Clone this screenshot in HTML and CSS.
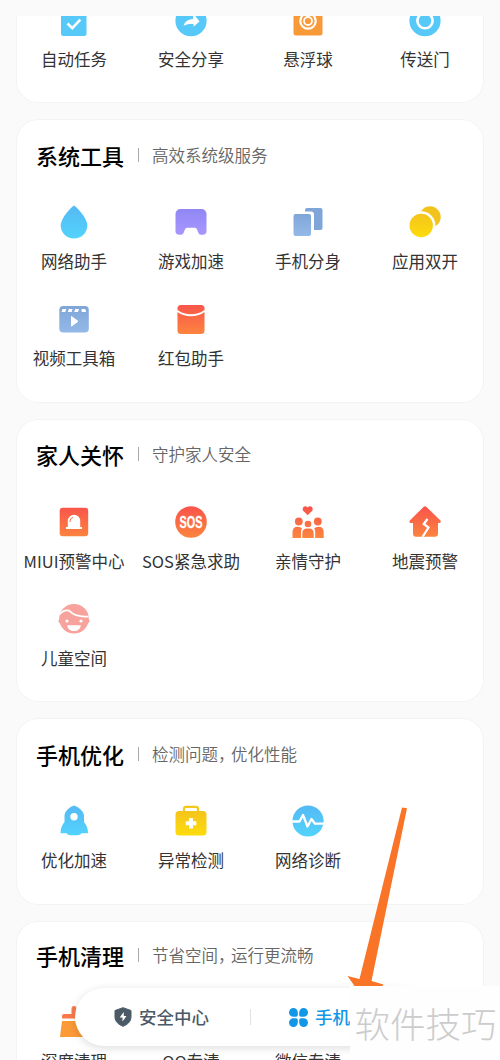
FILE: index.html
```
<!DOCTYPE html>
<html lang="zh-CN">
<head>
<meta charset="utf-8">
<title>手机管家</title>
<link rel="stylesheet" href="styles.css">
</head>
<body>
<svg class="defs" width="0" height="0">
  <defs>
    <linearGradient id="blue" x1="0" y1="0" x2="0" y2="1"><stop offset="0" stop-color="#54b9f4"/><stop offset="1" stop-color="#53d3fc"/></linearGradient>
    <linearGradient id="red" gradientUnits="userSpaceOnUse" x1="0" y1="3" x2="0" y2="33"><stop offset="0" stop-color="#f9544b"/><stop offset="1" stop-color="#fc843f"/></linearGradient>
    <linearGradient id="yellow" x1="0" y1="0" x2="0" y2="1"><stop offset="0" stop-color="#f4c41c"/><stop offset="1" stop-color="#fddc0c"/></linearGradient>
    <linearGradient id="slate" x1="0" y1="0" x2="0" y2="1"><stop offset="0" stop-color="#80a5d8"/><stop offset="1" stop-color="#93b9e8"/></linearGradient>
    <linearGradient id="purple" x1="0" y1="0" x2="0" y2="1"><stop offset="0" stop-color="#9087f4"/><stop offset="1" stop-color="#a896ff"/></linearGradient>
  </defs>
</svg>
<div class="screen">
  <main class="scroll">
    <section class="card card-first">
      <div class="grid">
        <div class="item">
          <svg class="icon" viewBox="0 0 36 36"><rect x="5" y="5" width="25.5" height="29" rx="2.5" fill="#56c9f8"/><path d="M11.5 21.5l4.8 4.7 8-8.6" fill="none" stroke="#fff" stroke-width="2.6"/></svg>
          <span class="label">自动任务</span>
        </div>
        <div class="item">
          <svg class="icon" viewBox="0 0 36 36"><circle cx="18" cy="18.7" r="15.6" fill="#56c9f8"/><path d="M20 11l6.500 8.500-6 5.200v-2.700c-4-.2-7 0-10 2 1.500-4.500 4-6.500 9.500-7z" fill="#fff"/></svg>
          <span class="label">安全分享</span>
        </div>
        <div class="item">
          <svg class="icon" viewBox="0 0 36 36"><rect x="3.5" y="5" width="29" height="28.5" rx="2.5" fill="#f99a39"/><circle cx="18" cy="19" r="7.7" fill="none" stroke="#fff" stroke-width="2.2"/><circle cx="18" cy="19" r="4" fill="none" stroke="#fff" stroke-width="1.8"/></svg>
          <span class="label">悬浮球</span>
        </div>
        <div class="item">
          <svg class="icon" viewBox="0 0 36 36"><circle cx="18" cy="18.7" r="15.6" fill="#56c9f8"/><circle cx="18" cy="18.7" r="7.600" fill="none" stroke="#fff" stroke-width="2.6"/></svg>
          <span class="label">传送门</span>
        </div>
      </div>
    </section>

    <section class="card">
      <header class="head"><h2 class="title">系统工具</h2><i class="bar"></i><p class="sub">高效系统级服务</p></header>
      <div class="grid">
        <div class="item">
          <svg class="icon" viewBox="0 0 36 36"><path d="M18 1.500C19 1.500 31.300 13.300 31.300 21.600a13.300 13 0 0 1-26.600 0C4.700 13.300 17 1.500 18 1.500z" fill="url(#blue)"/></svg>
          <span class="label">网络助手</span>
        </div>
        <div class="item">
          <svg class="icon" viewBox="0 0 36 36"><path d="M7.500 5h21a5 5 0 0 1 5 5v17a3.800 3.800 0 0 1-3.800 3.800H28c-4 0-2.500-7-6.500-7h-7c-4 0-2.500 7-6.500 7H6.300A3.800 3.800 0 0 1 2.500 27V10a5 5 0 0 1 5-5z" fill="url(#purple)"/></svg>
          <span class="label">游戏加速</span>
        </div>
        <div class="item">
          <svg class="icon" viewBox="0 0 36 36"><path d="M17 4h13.500a2 2 0 0 1 2 2v18a2 2 0 0 1-2 2H24V10.500a3 3 0 0 0-3-3h-6V6a2 2 0 0 1 2-2z" fill="#80a5d8"/><rect x="3.500" y="10" width="17.500" height="22" rx="2" fill="url(#slate)"/></svg>
          <span class="label">手机分身</span>
        </div>
        <div class="item">
          <svg class="icon" viewBox="0 0 36 36"><circle cx="23" cy="13" r="10.700" fill="#f3c31d"/><circle cx="14.200" cy="21.500" r="14.200" fill="#fff"/><circle cx="14.200" cy="21.500" r="11.700" fill="url(#yellow)"/></svg>
          <span class="label">应用双开</span>
        </div>
        <div class="item">
          <svg class="icon" viewBox="0 0 36 36"><rect x="3.300" y="5" width="29.500" height="26.500" rx="4" fill="url(#slate)"/><path d="M6.500 8h3.800l-1 3H5.500zM12.800 8h3.800l-1 3h-3.800zM19.200 8H23l-1 3h-3.800zM25.500 8h3.800l.8 3h-4.400z" fill="#fff"/><path d="M15.500 15.500v9.600l6.500-4.800z" fill="#fff" stroke="#fff" stroke-linejoin="round"/></svg>
          <span class="label">视频工具箱</span>
        </div>
        <div class="item">
          <svg class="icon" viewBox="0 0 36 36"><rect x="4.500" y="4" width="27" height="29" rx="3.500" fill="url(#red)"/><path d="M4 9.700c8.500 6 19.500 6 28 0" fill="none" stroke="#fff" stroke-width="2"/></svg>
          <span class="label">红包助手</span>
        </div>
      </div>
    </section>

    <section class="card">
      <header class="head"><h2 class="title">家人关怀</h2><i class="bar"></i><p class="sub">守护家人安全</p></header>
      <div class="grid">
        <div class="item">
          <svg class="icon" viewBox="0 0 36 36"><rect x="3.700" y="3.700" width="28.500" height="28.500" rx="3" fill="url(#red)"/><path d="M10 25v-2h1.800v-6a6.200 6.200 0 0 1 12.400 0v6H26v2z" fill="#fff"/><path d="M14 18c0-2.500 1-4 3-4.500" fill="none" stroke="#f96a46" stroke-width="1"/></svg>
          <span class="label">MIUI预警中心</span>
        </div>
        <div class="item">
          <svg class="icon" viewBox="0 0 36 36"><circle cx="18" cy="18" r="15.800" fill="url(#red)"/><text x="18" y="24" text-anchor="middle" textLength="23" lengthAdjust="spacingAndGlyphs" class="sos">SOS</text></svg>
          <span class="label">SOS紧急求助</span>
        </div>
        <div class="item">
          <svg class="icon" viewBox="0 0 36 36"><g fill="url(#red)"><path d="M17.700 11.300l-4.300-4.200c-2.500-3 1.800-6.800 4.300-3.700 2.500-3.100 6.800.7 4.300 3.700z"/><circle cx="8.800" cy="17.500" r="3.900"/><circle cx="27.800" cy="17.500" r="3.900"/><circle cx="18" cy="20" r="3.300"/><path d="M2.500 34v-5.500q0-5.800 5-5.800 3 0 4.500 1.500-1 1.500-1 4V34zM33.700 34v-5.500q0-5.800-5-5.800-3 0-4.500 1.500 1 1.500 1 4V34zM12.300 34v-4.500q0-4.900 4.700-4.900h2q4.700 0 4.700 4.900V34z"/></g></svg>
          <span class="label">亲情守护</span>
        </div>
        <div class="item">
          <svg class="icon" viewBox="0 0 36 36"><path d="M16.500 3q1.500-1.300 3 0L33.500 16.500q1 2.500-1.500 2.500h-1V29.800a3 3 0 0 1-3 3H9a3 3 0 0 1-3-3V19H4Q1.500 19 2.800 16.500z" fill="url(#red)"/><path d="M20.500 15L16.800 20l4.700 3.500-6 9.500" fill="none" stroke="#fff" stroke-width="2.300"/></svg>
          <span class="label">地震预警</span>
        </div>
        <div class="item">
          <svg class="icon" viewBox="0 0 36 36"><circle cx="18" cy="17.800" r="14.800" fill="#f7a29c"/><circle cx="4.700" cy="20" r="2.300" fill="#f7a29c"/><circle cx="31.300" cy="20" r="2.300" fill="#f7a29c"/><path d="M3.500 13.500c3-3.500 6.500-4.500 9.500-3.800 5 5 12 6.500 19.500 5.800" fill="none" stroke="#fff" stroke-width="1.700"/><circle cx="11" cy="20" r="1.600" fill="#fff"/><circle cx="25" cy="20" r="1.600" fill="#fff"/><path d="M11.300 24.300h13.400c0 7.700-13.400 7.700-13.400 0z" fill="#fff"/></svg>
          <span class="label">儿童空间</span>
        </div>
      </div>
    </section>

    <section class="card">
      <header class="head"><h2 class="title">手机优化</h2><i class="bar"></i><p class="sub">检测问题<span class="comma">，</span>优化性能</p></header>
      <div class="grid">
        <div class="item">
          <svg class="icon" viewBox="0 0 36 36"><path d="M18 2.500c4.500 1.500 10 5.500 10 10.500v6q4 4.500 4 11.300h-6.500q-1 2-4 2h-7q-3 0-4-2H4.500q0-6.800 4-11.300v-6C8.500 8 13.500 4 18 2.500z" fill="url(#blue)"/><circle cx="18" cy="13.700" r="3.700" fill="#fff"/></svg>
          <span class="label">优化加速</span>
        </div>
        <div class="item">
          <svg class="icon" viewBox="0 0 36 36"><path d="M11 8.500V5.800q0-2 2-2h10q2 0 2 2v2.700" fill="none" stroke="#f4c81b" stroke-width="2.200"/><rect x="2.500" y="8" width="31" height="24.500" rx="3.500" fill="url(#yellow)"/><path d="M18 15v10.500M12.700 20.300h10.600" stroke="#fff" stroke-width="4"/></svg>
          <span class="label">异常检测</span>
        </div>
        <div class="item">
          <svg class="icon" viewBox="0 0 36 36"><circle cx="18" cy="18" r="15.600" fill="url(#blue)"/><path d="M2 18.500h7.500l3.500-6.500 4.500 11.500 4-7.500 3.500 4.700h9" fill="none" stroke="#fff" stroke-width="2.300" stroke-linejoin="round"/></svg>
          <span class="label">网络诊断</span>
        </div>
      </div>
    </section>

    <section class="card card-last">
      <header class="head"><h2 class="title">手机清理</h2><i class="bar"></i><p class="sub">节省空间<span class="comma">，</span>运行更流畅</p></header>
      <div class="grid">
        <div class="item">
          <svg class="icon" viewBox="0 0 36 36"><path d="M6 14.500V12q0-2 2-2h7.500V5q0-3 2.500-3t2.500 3v5H28q2 0 2 2v2.500z" fill="#f9794d"/><path d="M6 17h24l2 16H4z" fill="#fb9a37"/></svg>
          <span class="label">深度清理</span>
        </div>
        <div class="item"><span class="icon"></span><span class="label">QQ专清</span></div>
        <div class="item"><span class="icon"></span><span class="label">微信专清</span></div>
      </div>
    </section>
  </main>

  <nav class="nav">
    <div class="tab">
      <svg class="shield" viewBox="0 0 18 20"><path d="M9 .7l8 2.800v6.500c0 4.500-3.500 7.500-8 9.300C4.500 17.500 1 14.500 1 10V3.500z" fill="#4c5a67" stroke="#4c5a67" stroke-linejoin="round"/><path d="M9.800 5L5.700 10.500h2.800v4l4-5.500H9.800z" fill="#fff"/></svg>
      <span>安全中心</span>
    </div>
    <i class="split"></i>
    <div class="tab active">
      <svg class="apps" viewBox="0 0 19 19" fill="#1296e6"><path d="M4.400 0a4.400 4.400 0 0 1 4.400 4.400V7a1.800 1.800 0 0 1-1.800 1.800H4.400a4.400 4.400 0 0 1 0-8.800z"/><path d="M14.600 0a4.400 4.400 0 0 1 0 8.800H12A1.800 1.800 0 0 1 10.200 7V4.400A4.400 4.400 0 0 1 14.600 0z"/><path d="M4.400 19a4.400 4.400 0 0 0 4.400-4.400V12A1.800 1.800 0 0 0 7 10.200H4.400a4.400 4.400 0 0 0 0 8.800z"/><path d="M14.600 19a4.400 4.400 0 0 0 0-8.800H12a1.800 1.800 0 0 0-1.800 1.800v2.600a4.400 4.400 0 0 0 4.400 4.400z"/></svg>
      <span>手机</span>
    </div>
  </nav>
  <svg class="arrow" viewBox="0 0 70 180"><path d="M56 0.500l5 .8L25.500 174l12 3.500-4 5H11L1.500 169l12 3z" fill="#fa7427"/></svg>
  <div class="mark">软件技巧</div>
</div>
</body>
</html>
```
FILE: styles.css
```
* { box-sizing: border-box; margin: 0; padding: 0; }
body {
  background: #fafafa;
  font-family: "Noto Sans CJK SC", sans-serif;
}
.defs { position: absolute; }
.screen {
  position: relative;
  width: 500px;
  height: 1060px;
  padding-top: 16px;
  overflow: hidden;
}
.scroll {
  display: flex;
  flex-direction: column;
  gap: 16px;
  height: 1044px;
  padding: 0 16px;
  overflow: hidden;
}
.card {
  flex: none;
  background: #fff;
  border-radius: 22px;
  padding-bottom: 15.5px;
  box-shadow: inset 0 0 0 1px #f3f3f3;
}
.card-first { margin-top: -25.5px; }
.head {
  display: flex;
  align-items: center;
  height: 74px;
  padding: 0 0 3px 20px;
}
.card-last .head { height: 72.5px; }
.title { font-size: 22px; font-weight: 500; line-height: 32px; color: #000; }
.bar { width: 1px; height: 14px; margin: 0 13.5px; background: #aaa; }
.sub { font-size: 16.5px; font-weight: 350; line-height: 24px; color: #666; }
.comma { letter-spacing: -3.5px; }
.grid {
  display: grid;
  grid-template-columns: repeat(4, 117px);
  margin-left: -0.5px;
}
.item {
  display: flex;
  flex-direction: column;
  align-items: center;
  height: 97px;
  padding-top: 11px;
}
.icon { display: block; width: 36px; height: 36px; flex: none; }
.label {
  margin-top: 9px;
  font-size: 16.5px;
  line-height: 24px;
  color: #333;
  white-space: nowrap;
}
.sos { font: bold 17px "Liberation Sans", sans-serif; fill: #fff; stroke: #fff; stroke-width: .3px; }

/* floating bottom navigation */
.nav {
  position: absolute;
  left: 75px;
  top: 988px;
  width: 350px;
  height: 58px;
  display: flex;
  align-items: center;
  border-radius: 29px;
  background: #fff;
  box-shadow: 0 2px 9px rgba(0, 0, 0, .14);
}
.tab {
  display: flex;
  align-items: center;
  gap: 7px;
  width: 175px;
  padding-left: 39px;
  font-size: 17.5px;
  font-weight: 500;
  color: #4c5a67;
}
.tab span { margin-top: -2px; }
.tab.active { color: #1296e6; }
.shield { width: 18px; height: 20px; }
.apps { width: 19px; height: 19px; }
.split { width: 1px; height: 16px; margin-right: -1px; background: #e2e2e2; }
.arrow { position: absolute; left: 346px; top: 807px; width: 70px; height: 180px; }
.mark {
  position: absolute;
  left: 350px;
  top: 986px;
  width: 150px;
  height: 74px;
  padding-left: 4.5px;
  background: #fefefe;
  font-size: 35.5px;
  font-weight: 300;
  line-height: 74px;
  color: #ccc;
  white-space: nowrap;
}
```
